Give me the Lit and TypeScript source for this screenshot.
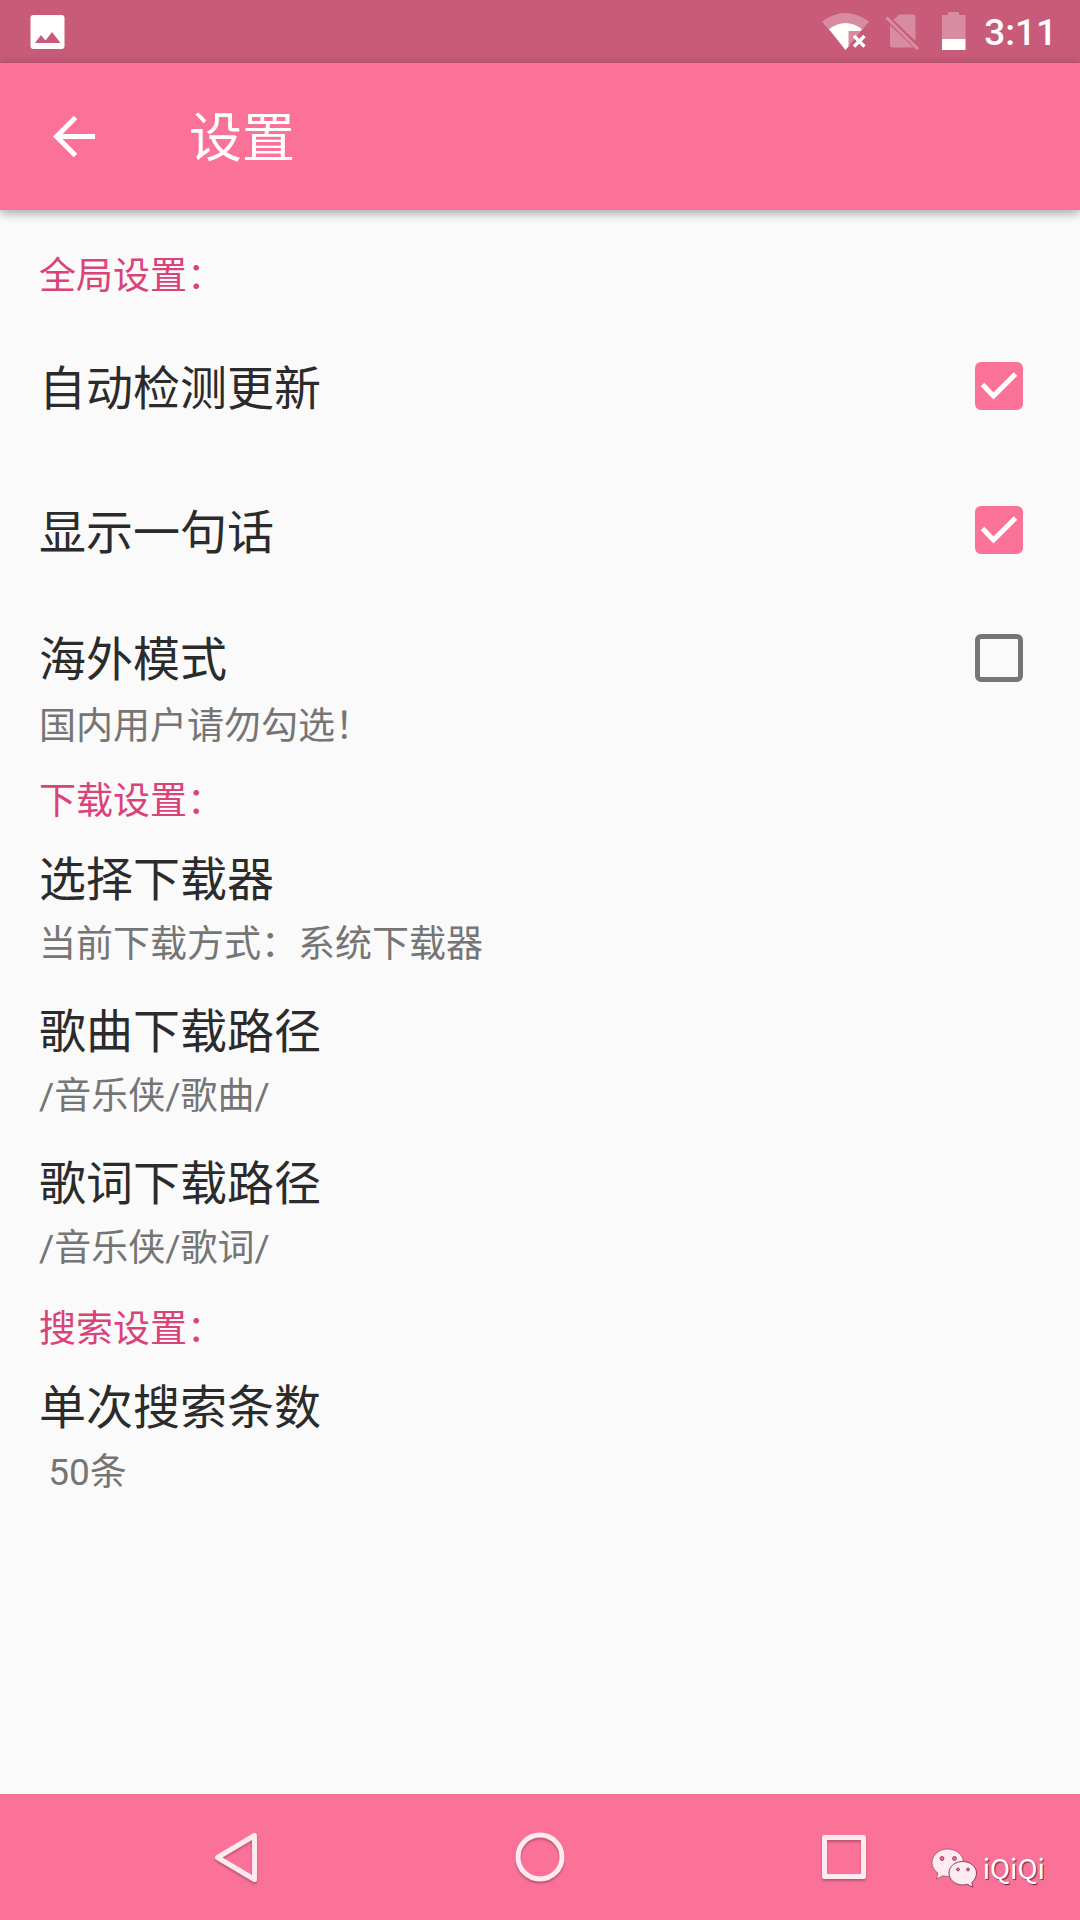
import { LitElement, html, svg, css, nothing } from "lit";
import { customElement, property, state } from "lit/decorators.js";

@customElement("status-bar")
export class StatusBar extends LitElement {
  static styles = css`
    :host {
      display: block;
    }
    .bar {
      display: flex;
      align-items: center;
      justify-content: space-between;
      height: 63px;
      padding: 0 23px 0 26px;
      background: #c85b79;
      color: #fff;
    }
    .group {
      display: flex;
      align-items: center;
    }
    .icon {
      display: block;
    }
    .clock {
      margin-left: 18px;
      padding-top: 3px;
      font: 500 37px/44px Roboto, "Liberation Sans", sans-serif;
    }
  `;

  render() {
    return html`
      <div class="bar">
        <div class="group">
          <svg class="icon" width="44" height="44" viewBox="0 0 44 44" aria-hidden="true">
            <path
              fill="#fff"
              fill-rule="evenodd"
              d="M7.500 5h28a3 3 0 0 1 3 3v28a3 3 0 0 1-3 3h-28a3 3 0 0 1-3-3V8a3 3 0 0 1 3-3zM9 33h25.500L26 22l-6.500 8.500-4.500-5.500z"
            />
          </svg>
        </div>
        <div class="group">
          <svg class="icon" width="144" height="48" viewBox="0 0 144 48" aria-hidden="true">
            <path fill="#fff" fill-opacity=".3" d="M0 13.500Q23.500-3.500 47 13.500L23.500 42z" />
            <path fill="#fff" d="M7 21Q23.500 9 40 21L38.500 23H26.500V38.500L23.500 42z" />
            <path stroke="#fff" stroke-width="3.400" d="M32 28l10.500 10.500M42.500 28L32 38.500" />
            <path
              fill="#fff"
              fill-opacity=".3"
              d="M77 6.500h14a2.500 2.500 0 0 1 2.500 2.500V33L71.500 12zM68 17L91.500 39.500H70.500A2.500 2.500 0 0 1 68 37z"
            />
            <path stroke="#fff" stroke-opacity=".3" stroke-width="3" d="M64.500 9.500L96 41" />
            <path fill="#fff" fill-opacity=".3" d="M126 4h11V7h6.500V31h-23.500V7h6z" />
            <path fill="#fff" d="M120 31h23.500V42h-23.500z" />
          </svg>
          <time class="clock">3:11</time>
        </div>
      </div>
    `;
  }
}

@customElement("title-bar")
export class TitleBar extends LitElement {
  @property() heading = "";

  static styles = css`
    :host {
      display: block;
    }
    .bar {
      display: flex;
      align-items: center;
      gap: 90px;
      height: 147px;
      padding: 0 45px;
      background: #fb7299;
      color: #fff;
      box-shadow: 0 3px 10px rgba(0, 0, 0, 0.36);
    }
    .back {
      display: block;
      padding: 0;
      border: 0;
      background: none;
      color: inherit;
    }
    .icon {
      display: block;
    }
    .title {
      margin: 0;
      padding-top: 4px;
      font: 400 53px/76px Roboto, "Noto Sans CJK SC", sans-serif;
    }
  `;

  render() {
    return html`
      <header class="bar">
        <button class="back" aria-label="返回">
          <svg class="icon" width="54" height="54" viewBox="0 0 54 54" aria-hidden="true">
            <path fill="none" stroke="#fff" stroke-width="5" d="M50 26.500H12M30.500 7.500L11.500 26.500l19 19" />
          </svg>
        </button>
        <h1 class="title">${this.heading}</h1>
      </header>
    `;
  }
}

@customElement("setting-row")
export class SettingRow extends LitElement {
  @property() label = "";
  @property() summary = "";
  @property({ type: Boolean }) toggle = false;
  @property({ type: Boolean }) checked = false;

  static styles = css`
    :host {
      display: block;
    }
    .row {
      box-sizing: border-box;
      display: flex;
      align-items: flex-start;
      justify-content: space-between;
      width: 100%;
      padding: 14px 57px 13px 39px;
      border: 0;
      background: none;
      text-align: left;
      font-family: Roboto, "Noto Sans CJK SC", sans-serif;
    }
    .text {
      display: flex;
      flex-direction: column;
      gap: 5px;
    }
    .toggle {
      padding-top: 24px;
      padding-bottom: 7px;
    }
    .toggle .text {
      gap: 7px;
      padding-top: 2px;
    }
    .single {
      align-items: center;
      min-height: 144px;
      padding-top: 14px;
      padding-bottom: 14px;
    }
    .single .text {
      padding-top: 6px;
    }
    .label {
      font-size: 47px;
      line-height: 64px;
      color: #2b2b2b;
    }
    .summary {
      font-size: 37px;
      line-height: 56px;
      white-space: pre;
      color: #757575;
    }
    .box {
      display: grid;
      align-items: center;
      height: 64px;
    }
    .input,
    .tick {
      grid-area: 1 / 1;
      width: 48px;
      height: 48px;
    }
    .input {
      appearance: none;
      box-sizing: border-box;
      margin: 0;
      border: 5px solid #757575;
      border-radius: 6px;
    }
    .input:checked {
      border-color: #fb7299;
      background: #fb7299;
    }
    .tick {
      pointer-events: none;
      visibility: hidden;
    }
    .input:checked + .tick {
      visibility: visible;
    }
  `;

  private flip(e: Event) {
    this.checked = (e.target as HTMLInputElement).checked;
  }

  render() {
    const text = html`
      <span class="text">
        <span class="label">${this.label}</span>
        ${this.summary ? html`<span class="summary">${this.summary}</span>` : nothing}
      </span>
    `;
    const single = this.summary ? "" : "single";
    if (!this.toggle) return html`<button class="row ${single}">${text}</button>`;
    return html`
      <label class="row toggle ${single}">
        ${text}
        <span class="box">
          <input class="input" type="checkbox" .checked=${this.checked} @change=${this.flip} />
          <svg class="tick" viewBox="0 0 48 48" aria-hidden="true">
            <path fill="none" stroke="#fff" stroke-width="5" d="M7.500 22.500L18.500 34 40.500 12" />
          </svg>
        </span>
      </label>
    `;
  }
}

@customElement("nav-bar")
export class NavBar extends LitElement {
  static styles = css`
    :host {
      display: block;
    }
    .bar {
      position: relative;
      display: grid;
      grid-template-columns: repeat(3, 304px);
      justify-content: center;
      align-items: center;
      height: 126px;
      background: #fb7299;
    }
    .key {
      display: grid;
      place-items: center;
      padding: 0;
      border: 0;
      background: none;
    }
    .icon {
      display: block;
      filter: drop-shadow(0 2px 1px rgba(0, 0, 0, 0.25));
    }
    .mark {
      position: absolute;
      right: 35px;
      bottom: 32px;
      display: flex;
      align-items: center;
      gap: 6px;
      color: #fff;
      font: 400 27px/40px "Noto Sans CJK SC", "Noto Sans", sans-serif;
      text-shadow: 1px 1px 1px rgba(60, 20, 40, 0.8);
    }
    .logo {
      display: block;
    }
  `;

  private key(name: string, shape: unknown) {
    return html`
      <button class="key" aria-label=${name}>
        <svg class="icon" width="56" height="56" viewBox="0 0 56 56" aria-hidden="true">
          <g fill="none" stroke="#ffeaf1" stroke-width="5" stroke-linejoin="round">${shape}</g>
        </svg>
      </button>
    `;
  }

  render() {
    return html`
      <nav class="bar">
        ${this.key("返回", svg`<path d="M46.500 6.500v44L9.500 28.500z" />`)}
        ${this.key("主页", svg`<circle cx="28" cy="28" r="22" />`)}
        ${this.key("最近任务", svg`<rect x="8.500" y="8.500" width="39" height="39" />`)}
        <div class="mark">
          <svg class="logo" width="46" height="40" viewBox="0 0 46 40" aria-hidden="true">
            <path
              fill="#ffeaf1"
              stroke="#8a4058"
              stroke-width=".7"
              d="M16.500 1C8 1 1 7 1 14.500c0 4.500 2.300 8 5.800 10.500L5.500 31l6.500-3.200c1.500.4 3 .6 4.500.6C25.500 28.400 32.500 22.500 32.500 14.700S25.500 1 16.500 1z"
            />
            <path
              fill="#ffeaf1"
              stroke="#8a4058"
              d="M31.500 13.500c-7.600 0-13.500 5-13.500 11.500s5.900 12 13.500 12c1.800 0 3.300-.2 4.800-.7l5.700 3-1.200-4.800c2.900-2.200 4.700-5.700 4.700-9.500 0-6.500-6.400-11.500-14-11.500z"
            />
            <g fill="#fb7299" stroke="#8a4058">
              <circle cx="11" cy="10.500" r="1.900" />
              <circle cx="23.500" cy="10.500" r="1.900" />
              <circle cx="27" cy="21.500" r="1.400" />
              <circle cx="37" cy="21.500" r="1.400" />
            </g>
          </svg>
          <span>iQiQi</span>
        </div>
      </nav>
    `;
  }
}

interface Setting {
  label: string;
  summary?: string;
  toggle?: boolean;
  checked?: boolean;
}

interface Group {
  title: string;
  settings: Setting[];
}

@customElement("app-root")
export class AppRoot extends LitElement {
  @state() private groups: Group[] = [
    {
      title: "全局设置：",
      settings: [
        { label: "自动检测更新", toggle: true, checked: true },
        { label: "显示一句话", toggle: true, checked: true },
        { label: "海外模式", summary: "国内用户请勿勾选！", toggle: true },
      ],
    },
    {
      title: "下载设置：",
      settings: [
        { label: "选择下载器", summary: "当前下载方式：系统下载器" },
        { label: "歌曲下载路径", summary: "/音乐侠/歌曲/" },
        { label: "歌词下载路径", summary: "/音乐侠/歌词/" },
      ],
    },
    {
      title: "搜索设置：",
      settings: [{ label: "单次搜索条数", summary: " 50条" }],
    },
  ];

  static styles = css`
    :host {
      display: flex;
      flex-direction: column;
      min-height: 100vh;
      background: #fafafa;
    }
    .content {
      flex: 1;
      padding-top: 27px;
    }
    .heading {
      margin: 0;
      padding: 8px 39px 0;
      font: 400 37px/64px Roboto, "Noto Sans CJK SC", sans-serif;
      color: #d9437a;
    }
    .group:first-child .heading {
      margin-bottom: 5px;
    }
  `;

  render() {
    return html`
      <status-bar></status-bar>
      <title-bar heading="设置"></title-bar>
      <main class="content">
        ${this.groups.map(
          (g) => html`
            <section class="group">
              <h2 class="heading">${g.title}</h2>
              ${g.settings.map(
                (s) => html`
                  <setting-row
                    .label=${s.label}
                    .summary=${s.summary ?? ""}
                    .toggle=${s.toggle ?? false}
                    .checked=${s.checked ?? false}
                  ></setting-row>
                `
              )}
            </section>
          `
        )}
      </main>
      <nav-bar></nav-bar>
    `;
  }
}
